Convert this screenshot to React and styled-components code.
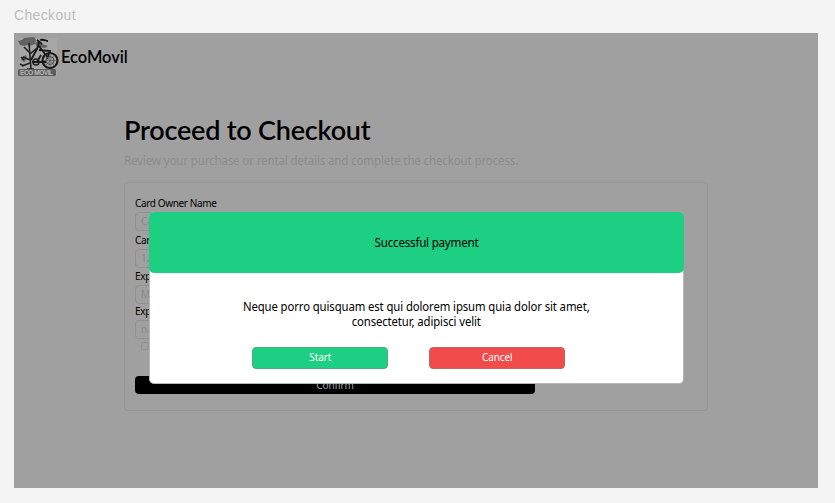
import React from 'react';
import styled, { createGlobalStyle } from 'styled-components';

const Global = createGlobalStyle`
  * { box-sizing: border-box; }
  body { margin: 0; background: #f4f4f4; overflow: hidden; font-family: "Noto Sans", sans-serif; color: #000; }
  h1, h2, p { margin: 0; font-weight: 400; }
`;
const Page = styled.div`
  height: 503px;
  padding: 0 17px 15px 14px;
  display: flex;
  flex-direction: column;
`;
const FrameLabel = styled.div`
  height: 33px;
  padding-top: 6px;
  font: 14px/18px "Liberation Sans", sans-serif;
  color: #bdbdbd;
  letter-spacing: 0.35px;
`;
const Frame = styled.main`
  position: relative;
  flex: 1;
  background: #a0a0a0;
`;
const Brand = styled.header`
  height: 48px;
  padding: 4px 0 0 4px;
  display: flex;
  gap: 2px;
`;
const BrandName = styled.span`
  padding-top: 9px;
  font: 600 16.5px/22px Lato, sans-serif;
  letter-spacing: -0.05px;
`;
const Content = styled.section`
  width: 584px;
  margin: 32px 0 0 110px;
`;
const Title = styled.h1`
  font: 600 27px/34px Lato, sans-serif;
  letter-spacing: -0.22px;
  white-space: nowrap;
`;
const Subtitle = styled.p`
  height: 35px;
  padding-top: 5px;
  font-size: 12px;
  line-height: 17px;
  letter-spacing: -0.17px;
  transform: scaleX(0.965);
  transform-origin: left;
  color: #8c8c8c;
  white-space: nowrap;
`;
const Card = styled.div`
  height: 229px;
  border: 1px solid #969696;
  border-radius: 4px;
  padding: 13px 10px 0;
  display: flex;
  flex-direction: column;
`;
const Field = styled.label`
  display: flex;
  flex-direction: column;
  height: ${p => p.$height}px;
`;
const FieldLabel = styled.span`
  height: ${p => p.$height}px;
  font-size: 10px;
  line-height: 14px;
  letter-spacing: -0.36px;
`;
const Input = styled.div`
  width: 400px;
  height: 19px;
  border: 1px solid #919191;
  border-radius: 4px;
  padding-left: 5px;
  font-size: 10px;
  line-height: 17px;
  color: #8a8a8a;
`;
const CheckRow = styled.div`
  height: 37px;
  padding: 3px 0 0 6px;
  display: flex;
`;
const Checkbox = styled.span`
  width: 8px;
  height: 8px;
  border: 1px solid #929292;
  border-radius: 1px;
`;
const Confirm = styled.div`
  width: 400px;
  height: 18px;
  border-radius: 4px;
  background: #000;
  color: #a0a0a0;
  font-size: 10px;
  line-height: 18px;
  letter-spacing: -0.1px;
  text-align: center;
`;
const Modal = styled.div`
  position: absolute;
  left: 135px;
  top: 179px;
  width: 534.5px;
  height: 172px;
  border: 1px solid #b7b7b7;
  border-top: 0;
  border-radius: 5px;
  background: #fff;
`;
const ModalHeader = styled.div`
  height: 61px;
  margin: 0 -1px;
  border-radius: 5px;
  background: #1dcf82;
  display: flex;
  align-items: center;
  justify-content: center;
  padding-left: 20px;
`;
const ModalTitle = styled.h2`
  font-size: 12px;
  line-height: 16px;
  letter-spacing: -0.25px;
  transform: scaleX(0.97);
`;
const Message = styled.div`
  padding-top: 26px;
  height: 74px;
  font-size: 12px;
  line-height: 15px;
  letter-spacing: -0.1px;
  transform: scaleX(0.943);
  text-align: center;
`;
const Actions = styled.div`
  display: flex;
  justify-content: center;
  gap: 41px;
  padding-right: 15px;
`;
const Action = styled.div`
  width: 136px;
  height: 21.5px;
  border: 1px solid ${p => p.$border};
  border-radius: 4px;
  background: ${p => p.$color};
  color: #fff;
  font-size: 10px;
  line-height: 19px;
  letter-spacing: -0.1px;
  text-align: center;
`;
const LogoSvg = styled.svg`
  width: 41px;
  height: 40px;
  flex: none;
  text { font: 700 6.5px "Liberation Sans", sans-serif; }
`;

const Logo = () => (
  <LogoSvg viewBox="0 0 41 40" fill="none">
    <path d="M1 1h38v38H1z" fill="#a6a6a6" />
    <path d="M0 4l4-1 2-2 10-1 2 3-1 4-5 2-3-1-3 1-4-1zM17 6l4-2 3 3 6 2-3 2-5-1-3 1zM4 20l4-2 1 4-3 3-3-2z" fill="#626262" />
    <path d="M11 6l1 13 1 13M12 16L6 10M12 17l7-6M12 23l-7-3M12 26l-8 3M3 20l3 3M2 27l4 2M9 32h7" stroke="#202020" strokeWidth="1.6" />
    <path d="M19 3l5 4M22 3c4-1 6 1 8 1M21 4l-1 6M21 9l9 12M20 10l-7 13M21 13l11 1-3 8M14 25h14M23 18l-4 7" stroke="#171717" strokeWidth="1.8" />
    <circle cx="32" cy="23.5" r="7.5" stroke="#171717" strokeWidth="2.2" />
    <circle cx="32" cy="23.5" r="4" stroke="#454545" strokeWidth="1" />
    <path d="M32 16v15M25 23.5h14M27 18l10 11M27 29l10-11" stroke="#505050" strokeWidth=".6" />
    <circle cx="18" cy="25" r="3" stroke="#222" strokeWidth="1.6" />
    <rect y="32" width="38" height="7" rx="1.5" fill="#5d5d5d" />
    <text x="2" y="38" textLength="33" fill="#bababa">ECO MOVIL</text>
  </LogoSvg>
);

const fields = [
  { label: 'Card Owner Name', hint: 'Card Owner Name', height: 37, labelHeight: 16 },
  { label: 'Card Number', hint: '1234 5678 9012', height: 36, labelHeight: 16 },
  { label: 'Expiration Date', hint: 'MM/YY', height: 35, labelHeight: 17 },
  { label: 'Expiration Email', hint: 'name@email.com', height: 35, labelHeight: 16 },
];

export default function App() {
  return (
    <Page>
      <Global />
      <FrameLabel>Checkout</FrameLabel>
      <Frame>
        <Brand><Logo /><BrandName>EcoMovil</BrandName></Brand>
        <Content>
          <Title>Proceed to Checkout</Title>
          <Subtitle>Review your purchase or rental details and complete the checkout process.</Subtitle>
          <Card>
            {fields.map(f => (
              <Field key={f.label} $height={f.height}>
                <FieldLabel $height={f.labelHeight}>{f.label}</FieldLabel>
                <Input>{f.hint}</Input>
              </Field>
            ))}
            <CheckRow><Checkbox /></CheckRow>
            <Confirm>Confirm</Confirm>
          </Card>
        </Content>
        <Modal>
          <ModalHeader><ModalTitle>Successful payment</ModalTitle></ModalHeader>
          <Message>Neque porro quisquam est qui dolorem ipsum quia dolor sit amet,<br />consectetur, adipisci velit</Message>
          <Actions>
            <Action $color="#1dcf82" $border="#4eaa80">Start</Action>
            <Action $color="#f24b4b" $border="#c06565">Cancel</Action>
          </Actions>
        </Modal>
      </Frame>
    </Page>
  );
}
